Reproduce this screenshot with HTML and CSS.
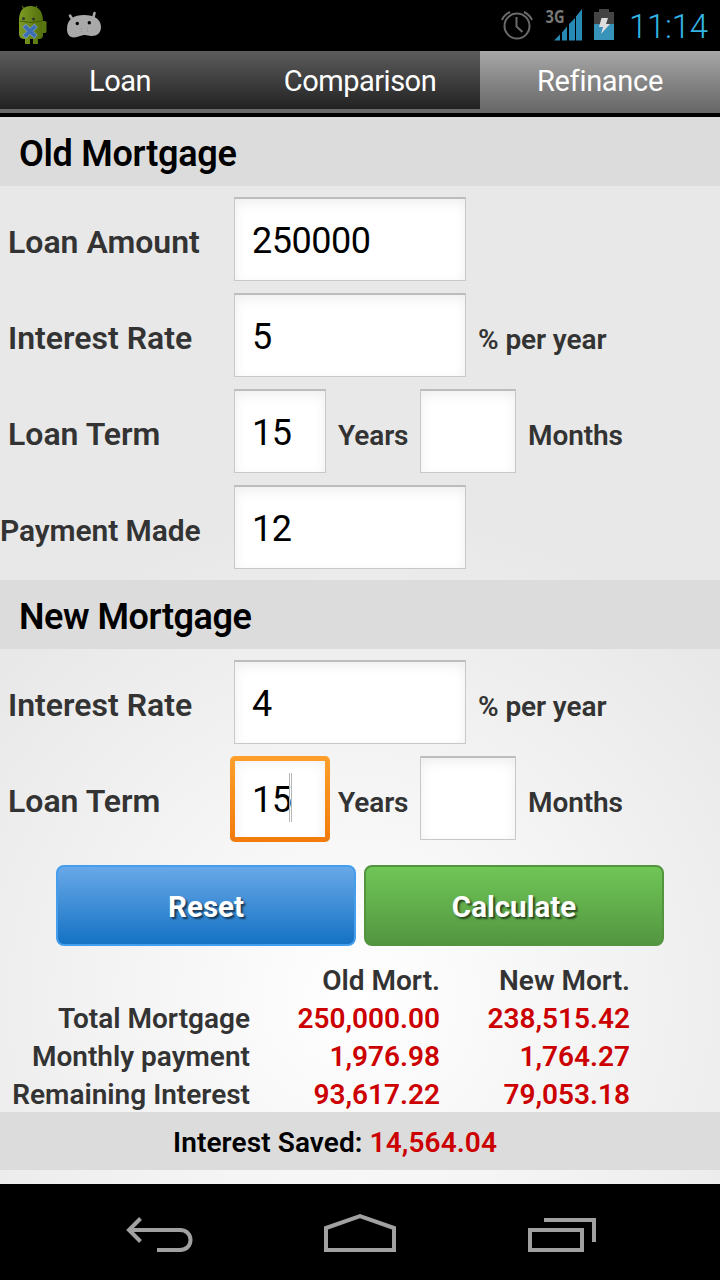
FILE: index.html
```html
<!DOCTYPE html>
<html lang="en">
<head>
<meta charset="utf-8">
<title>Mortgage Calculator</title>
<link rel="stylesheet" href="styles.css">
</head>
<body>
<div class="screen">
  <header class="status">
    <svg class="i-robot" width="30" height="40" viewBox="0 0 30 40">
      <defs><linearGradient id="rg" x1="0" x2="1"><stop offset="0" stop-color="#7d9b24"/><stop offset="1" stop-color="#526f0c"/></linearGradient></defs>
      <path d="M4 1l3 4M19 1l-3 4" stroke="#59711c" stroke-width="1.2"/>
      <path d="M1 16C1 6 5 1 12.500 1S25 6 25 16v14q0 3-3 4h-2v5h-5v-5h-3v5H7v-5H5q-4-1-4-5z" fill="url(#rg)"/>
      <rect x="23.500" y="16" width="5" height="12" rx="1.500" fill="#58750f"/>
      <path d="M2 16q11 3 22 0" stroke="#435a10" fill="none"/>
      <circle cx="5.500" cy="13.500" r="1.500" fill="#333"/><circle cx="15.500" cy="14" r="1.500" fill="#333"/>
      <path d="M6 20.500l12 11.500M18 20.500L6 32" stroke="#7f9fc0" stroke-width="5"/><path d="M6.500 21l11 10.500M17.500 21L6.500 31.500" stroke="#3c6cb2" stroke-width="3.800"/>
    </svg>
    <svg class="i-head" width="36" height="28" viewBox="0 0 36 28">
      <path d="M4 5.500l3 5M28.500 3l-1.500 6" stroke="#a9a9a9" stroke-width="2.600" stroke-linecap="round"/>
      <path d="M1 19C1 9 8 5 18 5s17 4 17 12c0 6-4 9-9 9-4 0-5-1-8-1s-6 2.500-10 2.500c-5 0-7-4-7-8.500z" fill="#a9a9a9"/>
      <circle cx="11.300" cy="13.500" r="1.700"/><circle cx="23.300" cy="12.700" r="1.700"/>
      <path d="M15 18.500h1M20.500 18h1M15 21.500h1M21 21h1" stroke="#888"/>
    </svg>
    <span class="grow"></span>
    <svg width="92" height="50" viewBox="0 0 92 50" class="signal">
      <g fill="none" stroke="#6a6a6a" stroke-width="2"><circle cx="16" cy="26" r="12.500"/><path d="M15.500 17v9.500l6 5.500M1 20q2-5 8-8M31 20q-2-5-8-8"/></g>
      <text x="44.500" y="23" class="net" textLength="19" lengthAdjust="spacingAndGlyphs">3G</text>
      <path d="M53 40.500l6-6v6zM61 32.500l5-6V40.500H61zM68 24l6-6v22.500h-6zM75 16.500L81 9v31.500h-6z" fill="#278ab4"/>
    </svg>
    <svg class="battery" width="20" height="32" viewBox="0 0 20 32">
      <path d="M0 3h5V0h10v3h5v12H0z" fill="#444"/><path d="M0 15h20v16H0z" fill="#3893bb"/>
      <path d="M7.500 9H14l-2 6h4L7 25l2-7H5z" fill="#ddd"/>
    </svg>
    <svg class="clock" width="82" height="40"><text x="0" y="29" textLength="79">11:14</text></svg>
  </header>
  <nav class="tabs">
    <div class="tab"><span>Loan</span></div>
    <div class="tab"><span>Comparison</span></div>
    <div class="tab active"><span>Refinance</span></div>
  </nav>
  <main class="main">
    <h2 class="head">Old Mortgage</h2>
    <section class="form">
      <div class="row"><label>Loan Amount</label><div class="field">250000</div></div>
      <div class="row"><label>Interest Rate</label><div class="field">5</div><span class="unit">% per year</span></div>
      <div class="row"><label>Loan Term</label><div class="field years">15</div><span class="unit y">Years</span><div class="field months"></div><span class="unit">Months</span></div>
      <div class="row pay"><label>Payment Made</label><div class="field">12</div></div>
    </section>
    <h2 class="head new-head">New Mortgage</h2>
    <section class="form new">
      <div class="row"><label>Interest Rate</label><div class="field">4</div><span class="unit">% per year</span></div>
      <div class="row"><label>Loan Term</label><div class="field years focus">15<i class="caret"></i></div><span class="unit y">Years</span><div class="field months"></div><span class="unit">Months</span></div>
    </section>
    <div class="buttons"><div class="btn blue">Reset</div><div class="btn green">Calculate</div></div>
    <section class="results">
      <span></span><span>Old Mort.</span><span>New Mort.</span>
      <span>Total Mortgage</span><b>250,000.00</b><b>238,515.42</b>
      <span>Monthly payment</span><b>1,976.98</b><b>1,764.27</b>
      <span>Remaining Interest</span><b>93,617.22</b><b>79,053.18</b>
    </section>
    <div class="saved"><span>Interest Saved: <b>14,564.04</b></span></div>
  </main>
  <footer class="navbar">
    <svg width="720" height="96" viewBox="0 0 720 96" fill="none" stroke="#a1a1a1" stroke-width="4">
      <path d="M129 46h51c14 0 14 20 0 20h-23M140.500 34.500L129 46l11.500 11.500"/>
      <path d="M326 66V44l34-12 34 12v22z"/>
      <path d="M530 46h52v20h-52zM544 36h50v22"/>
    </svg>
  </footer>
</div>
</body>
</html>
```
FILE: styles.css
```css
* { box-sizing: border-box; }
body { margin: 0; background: #000; font-family: Roboto, "Liberation Sans", sans-serif; }
.screen { width: 720px; height: 1280px; display: flex; flex-direction: column; overflow: hidden; }
.status { height: 51px; display: flex; align-items: flex-start; flex: none; }
.i-robot { margin: 5px 0 0 18px; }
.i-head { margin: 10px 0 0 18px; }
.grow { flex: 1; }
.signal { margin-right: 1px; }
.net { font: 700 18px "Open Sans", sans-serif; fill: #777; }
.battery { margin: 9px 15px 0 0; }
.clock { margin: 9px 9px 0 0; overflow: visible; }
.clock text { font-size: 33px; font-weight: 350; fill: #33b5e5; }
.tabs { height: 66px; flex: none; display: flex; border-bottom: 4px solid #000; background: #696969; }
.tab { flex: 1; height: 58px; background: linear-gradient(#5c5c5c, #222); color: #fff; font-size: 29px; letter-spacing: -.5px; display: flex; justify-content: center; line-height: 61px; }
.tab.active { height: 62px; background: linear-gradient(#a8a8a8, #858585 50%, #666); letter-spacing: -.3px; }
.main { height: 1067px; flex: none; background: radial-gradient(circle 490px at 360px 883px, #fff, #e8e8e8); }
.head { margin: 0; height: 69px; padding-left: 19px; background: #dcdcdc; color: #000; font-size: 36px; font-weight: 600; letter-spacing: -.28px; line-height: 75px; }
.new-head { letter-spacing: -.45px; }
.form { height: 394px; padding-top: 11px; display: flex; flex-direction: column; gap: 12px; }
.form.new { height: 216px; }
.row { height: 84px; display: flex; align-items: center; flex: none; }
.row label { width: 234px; padding: 5px 0 0 8px; font-size: 32px; font-weight: 600; color: #333; white-space: nowrap; }
.row.pay label { padding: 7px 0 0; font-size: 30px; letter-spacing: -.1px; }
.field { width: 232px; height: 84px; padding-left: 17px; border: 1px solid #c8c8c8; border-top: 2px solid #bdbdbd; background: #fff; box-shadow: inset 0 4px 12px #eee; color: #000; font-size: 36px; letter-spacing: -.5px; line-height: 84px; flex: none; }
.field.years { width: 92px; }
.field.months { width: 96px; }
.unit { margin-left: 12px; padding-top: 8px; font-size: 28px; font-weight: 600; letter-spacing: -.1px; color: #333; white-space: nowrap; }
.unit.y { width: 82px; }
.focus { position: relative; z-index: 1; border-color: #f5f5f5; }
.focus::before { content: ""; position: absolute; inset: -2px -5px -3px; border-radius: 5px; background: linear-gradient(#fe9f2b, #f27b0b); clip-path: polygon(evenodd, 0 0, 100% 0, 100% 100%, 0 100%, 0 0, 5px 5px, calc(100% - 5px) 5px, calc(100% - 5px) calc(100% - 5px), 5px calc(100% - 5px), 5px 5px); }
.caret { position: absolute; left: 54px; top: 15px; width: 3px; height: 49px; border: solid #b7b7b7; border-width: 0 1px; }
.buttons { height: 81px; display: flex; gap: 8px; justify-content: center; }
.btn { width: 300px; height: 81px; border: 2px solid; border-radius: 8px; color: #fff; font-size: 29.500px; font-weight: 700; line-height: 80px; text-align: center; text-shadow: 2px 2px 2px #0009; }
.blue { border-color: #459eed; background: linear-gradient(#68a8e8, #1572c4); }
.green { border-color: #52953e; background: linear-gradient(#70c657, #539640); }
.results { height: 166px; padding-top: 15px; display: grid; grid-template-columns: 250px 190px 190px; grid-auto-rows: 38px; line-height: 39px; font-size: 28px; font-weight: 600; color: #333; text-align: right; white-space: nowrap; }
.results b, .saved b { color: #c00; font-weight: 600; }
.saved { height: 58px; background: #dcdcdc; color: #000; font-size: 28px; font-weight: 600; letter-spacing: .1px; line-height: 61px; display: flex; padding-left: 173px; white-space: nowrap; }
.navbar { height: 96px; flex: none; background: #000; }
.navbar svg { display: block; }
```
